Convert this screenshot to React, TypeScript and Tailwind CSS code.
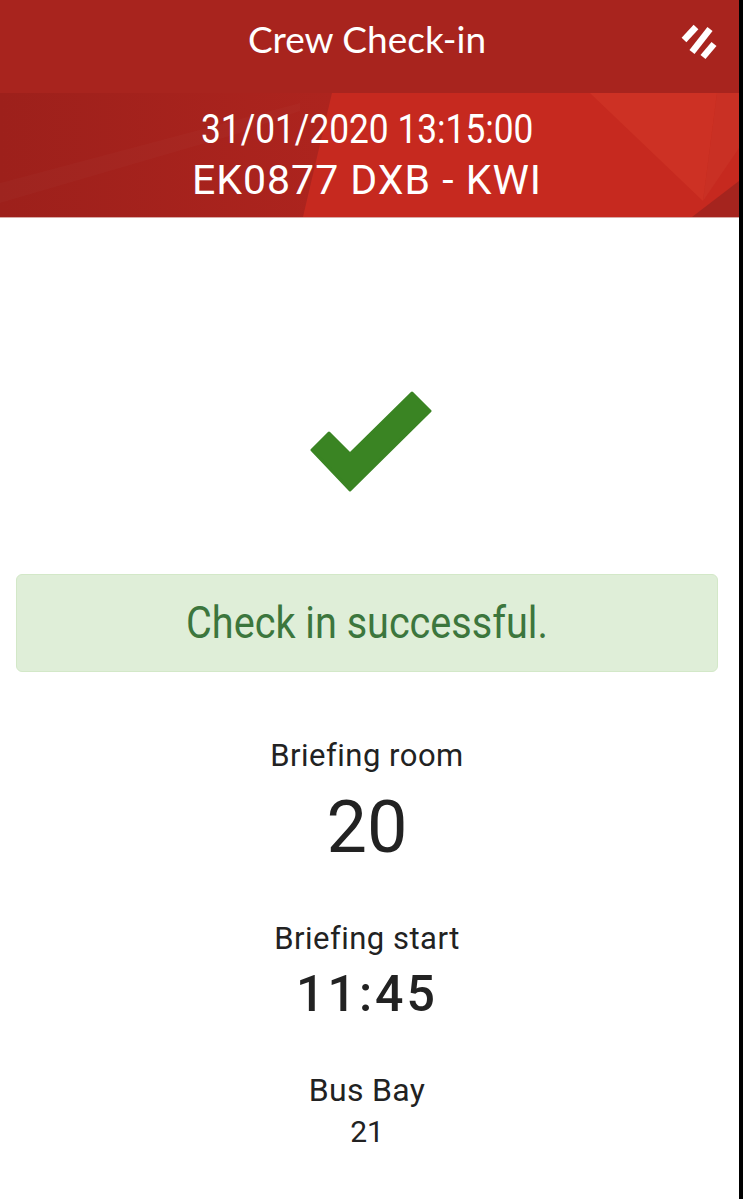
export default function App() {
  return (
    <div className="flex w-[743px] h-[1199px] overflow-hidden bg-black">
      <div className="w-[739px] h-full flex flex-col bg-white font-['Roboto',sans-serif] text-[#222222]">
        {/* Top bar */}
        <header className="h-[93px] shrink-0 bg-[#a8241e] grid grid-cols-[1fr_auto_1fr] pr-[5px]">
          <div />
          <h1 className="pt-[20px] text-[37px] leading-none text-white font-['Lato',sans-serif] font-normal">
            Crew Check-in
          </h1>
          <div className="flex justify-end pt-[22px] pr-[16px]">
            <svg width="40" height="40" viewBox="0 0 40 40" fill="none" stroke="#ffffff" strokeWidth="6.5" strokeLinecap="butt">
              <line x1="18" y1="5" x2="6" y2="18" />
              <line x1="32" y1="7" x2="14" y2="30" />
              <line x1="36" y1="22" x2="25" y2="35" />
            </svg>
          </div>
        </header>

        {/* Flight band */}
        <div className="relative h-[124px] shrink-0 bg-[#c6291f] overflow-hidden">
          <svg className="absolute inset-0 pointer-events-none" width="739" height="124" viewBox="0 0 739 124">
            <defs>
              <linearGradient id="lg" x1="0" y1="0" x2="1" y2="0">
                <stop offset="0" stopColor="#9d201b" />
                <stop offset="1" stopColor="#ad241e" />
              </linearGradient>
            </defs>
            <polygon points="0,0 332,0 303,124 0,124" fill="url(#lg)" />
            <polygon points="0,90 0,110 240,40 300,18 300,10" fill="#ffffff" opacity="0.02" />
            <polygon points="590,0 717,0 703,108" fill="#d43b2b" opacity="0.45" />
            <polygon points="717,0 739,0 739,55 703,108" fill="#c93024" />
            <polygon points="739,88 739,124 692,124" fill="#a5241e" />
          </svg>
          <div className="relative flex flex-col items-center pr-[5px] pt-[16px] text-white">
            <div className="text-[41px] leading-none scale-x-[0.86]">31/01/2020 13:15:00</div>
            <div className="mt-[10px] text-[41px] leading-none tracking-[1px]">EK0877 DXB - KWI</div>
          </div>
        </div>
        <div className="h-px shrink-0 bg-[#d9aaa6]" />

        {/* Body */}
        <div className="flex flex-col items-center pr-[5px]">
          <svg className="mt-[173px] ml-[8px]" width="122" height="101" viewBox="0 0 122 101">
            <polygon
              points="2,59 19,42 40,63 102,2 120,20 40,99"
              fill="#3a8423"
              stroke="#3a8423"
              strokeWidth="3"
              strokeLinejoin="round"
            />
          </svg>
        </div>

        <div className="mt-[82px] ml-4 mr-[21px] h-[98px] rounded-md border border-[#d3e8c8] bg-[#dfeed8] flex items-center justify-center">
          <div className="text-[44px] leading-none text-[#3c763d] scale-x-[0.9]">Check in successful.</div>
        </div>

        <div className="flex flex-col items-center pr-[5px]">
          <div className="mt-[68px] text-[31px] leading-none tracking-[0.5px]">Briefing room</div>
          <div className="mt-[21px] text-[72px] leading-none">20</div>
          <div className="mt-[59px] text-[31px] leading-none tracking-[0.5px]">Briefing start</div>
          <div className="mt-[15px] text-[50px] leading-none font-medium tracking-[3px]">11:45</div>
          <div className="mt-[55px] text-[32px] leading-none tracking-[0.3px]">Bus Bay</div>
          <div className="mt-[11px] text-[30px] leading-none">21</div>
        </div>
      </div>
      <div className="flex-1 bg-black" />
    </div>
  );
}
